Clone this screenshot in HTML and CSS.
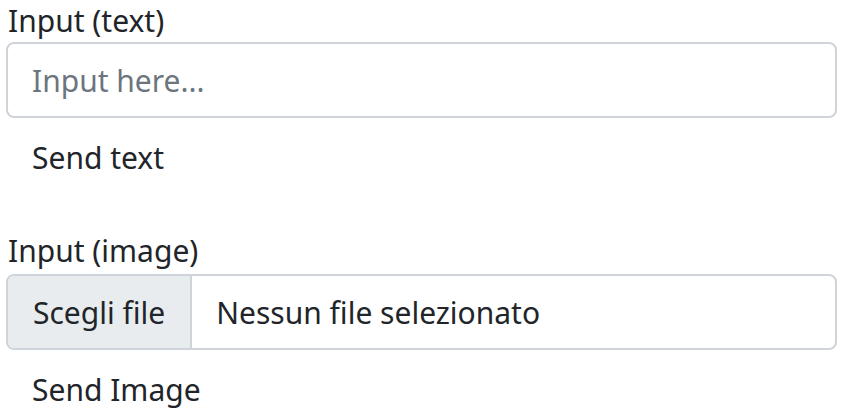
FILE: index.html
```html
<!DOCTYPE html>
<html lang="it">
<head>
<meta charset="utf-8">
<title>Input</title>
<link rel="stylesheet" href="styles.css">
</head>
<body>
<div class="page">
  <div class="field">
    <label class="label" for="txt">Input (text)</label>
    <input class="control" id="txt" type="text" placeholder="Input here...">
    <button class="btn" type="button">Send text</button>
  </div>
  <div class="field second">
    <label class="label">Input (image)</label>
    <div class="control file">
      <span class="file-btn">Scegli file</span>
      <span class="file-name">Nessun file selezionato</span>
    </div>
    <button class="btn" type="button">Send Image</button>
  </div>
</div>
</body>
</html>
```

FILE: styles.css
```css
html, body {
  margin: 0;
  padding: 0;
  background: #fff;
}
.page {
  padding-left: 6px;
  width: 831px;
  font-family: "Noto Sans", "Open Sans", sans-serif;
  font-size: 30px;
  color: #212529;
}
.field {
  display: flex;
  flex-direction: column;
  align-items: flex-start;
}
.second {
  margin-top: 34px;
}
.label {
  display: block;
  line-height: 42px;
  margin: 0 0 0 2px;
}
.second .label {
  margin-bottom: 2px;
}
.control {
  box-sizing: border-box;
  width: 831px;
  height: 76px;
  border: 2px solid #ced4da;
  border-radius: 8px;
  padding: 0 24px;
  font: inherit;
  color: #212529;
  background: #fff;
  outline: none;
  margin: 0;
}
.control::placeholder {
  color: #6c757d;
}
.file {
  display: flex;
  align-items: stretch;
  padding: 0;
  overflow: hidden;
}
.file-btn {
  display: flex;
  align-items: center;
  padding: 0 25px;
  background: #e9ecef;
  border-right: 2px solid #ced4da;
}
.file-name {
  display: flex;
  align-items: center;
  padding-left: 24px;
}
.btn {
  margin-top: 2px;
  font: inherit;
  color: #212529;
  background: transparent;
  border: 2px solid transparent;
  padding: 12px 24px;
  line-height: 48px;
  cursor: pointer;
}
```
